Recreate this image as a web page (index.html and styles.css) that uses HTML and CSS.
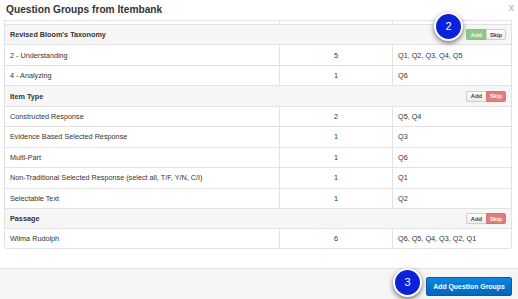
FILE: index.html
```html
<!DOCTYPE html>
<html lang="en">
    <head>
        <meta charset="UTF-8">
        <title>Question Groups from Itembank</title>
        <link rel="stylesheet" href="styles.css">
    </head>
    <body>
        <div class="modal">
            <header class="modal-header">
                <h3>Question Groups from Itembank</h3>
                <span class="cerrar">x</span>
            </header>
            <main class="modal-body">
                <div class="tabla">
                    <div class="fila corte"><div class="c1"></div><div class="c2"></div><div class="c3"></div></div>

                    <div class="fila grupo">
                        <span>Revised Bloom's Taxonomy</span>
                        <span class="botones"><button class="btn agregado">Add</button><button class="btn">Skip</button></span>
                    </div>
                    <div class="fila"><div class="c1">2 - Understanding</div><div class="c2">5</div><div class="c3">Q1, Q2, Q3, Q4, Q5</div></div>
                    <div class="fila"><div class="c1">4 - Analyzing</div><div class="c2">1</div><div class="c3">Q6</div></div>

                    <div class="fila grupo">
                        <span>Item Type</span>
                        <span class="botones"><button class="btn">Add</button><button class="btn omitido">Skip</button></span>
                    </div>
                    <div class="fila"><div class="c1">Constructed Response</div><div class="c2">2</div><div class="c3">Q5, Q4</div></div>
                    <div class="fila"><div class="c1">Evidence Based Selected Response</div><div class="c2">1</div><div class="c3">Q3</div></div>
                    <div class="fila"><div class="c1">Multi-Part</div><div class="c2">1</div><div class="c3">Q6</div></div>
                    <div class="fila"><div class="c1">Non-Traditional Selected Response (select all, T/F, Y/N, C/I)</div><div class="c2">1</div><div class="c3">Q1</div></div>
                    <div class="fila"><div class="c1">Selectable Text</div><div class="c2">1</div><div class="c3">Q2</div></div>

                    <div class="fila grupo">
                        <span>Passage</span>
                        <span class="botones"><button class="btn">Add</button><button class="btn omitido">Skip</button></span>
                    </div>
                    <div class="fila ultima"><div class="c1">Wilma Rudolph</div><div class="c2">6</div><div class="c3">Q6, Q5, Q4, Q3, Q2, Q1</div></div>
                </div>
            </main>
            <footer class="modal-footer">
                <button class="btn-primario">Add Question Groups</button>
            </footer>
            <span class="paso paso2">2</span>
            <span class="paso paso3">3</span>
        </div>
    </body>
</html>
```
FILE: styles.css
```css
* {
    box-sizing: border-box;
}
body {
    margin: 0;
    background: #fff;
    font-family: "Liberation Sans", Arial, sans-serif;
    color: #333;
}
.modal {
    position: relative;
    width: 518px;
    height: 299px;
    overflow: hidden;
    display: flex;
    flex-direction: column;
}
.modal-header {
    height: 20px;
    display: flex;
    justify-content: space-between;
    padding: 0 6px;
}
.modal-header h3 {
    margin: 0;
    padding-top: 3px;
    font-size: 10.2px;
    line-height: 13px;
    font-weight: bold;
    color: #333;
}
.cerrar {
    color: #c4c4c4;
    font-size: 10px;
    font-weight: bold;
    line-height: 12px;
    padding-top: 2px;
    margin-right: -2px;
}
.modal-body {
    height: 248px;
    padding: 0 6px 0 4px;
}
.tabla {
    border: 1px solid #e2e2e2;
    border-top: none;
    border-radius: 0 0 3px 3px;
    font-size: 7.25px;
}
.fila {
    display: flex;
    align-items: center;
    height: 20.45px;
    border-top: 1px solid #e2e2e2;
}
.fila.corte {
    height: 4px;
}
.fila.ultima {
    height: 20px;
}
.c1, .c2, .c3 {
    height: 100%;
    display: flex;
    align-items: center;
    padding: 0 5px;
}
.c1 {
    width: 274px;
}
.c2 {
    width: 113px;
    justify-content: center;
    border-left: 1px solid #e2e2e2;
}
.c3 {
    flex: 1;
    border-left: 1px solid #e2e2e2;
}
.grupo {
    background: #f6f6f6;
    justify-content: space-between;
    padding: 0 5px;
    font-weight: bold;
}
.botones {
    display: flex;
}
.btn {
    width: 20px;
    height: 11px;
    padding: 0;
    font-family: "Liberation Sans", Arial, sans-serif;
    font-size: 5.8px;
    font-weight: bold;
    color: #444;
    background: linear-gradient(#fdfdfd, #ececec);
    border: 1px solid #cfcfcf;
    border-radius: 0 2px 2px 0;
}
.btn:first-child {
    border-right: none;
    border-radius: 2px 0 0 2px;
}
.btn.agregado {
    background: #8cc98a;
    border-color: #86c384;
    color: #f2fff2;
}
.btn.omitido {
    background: #df7f7b;
    border-color: #d77571;
    color: #fff4f4;
}
.modal-footer {
    flex: 1;
    display: flex;
    justify-content: flex-end;
    align-items: flex-start;
    padding: 8px 6px 0 0;
    background: #f5f5f5;
    border-top: 1px solid #e3e3e3;
}
.btn-primario {
    width: 86px;
    height: 19px;
    padding: 0;
    font-family: "Liberation Sans", Arial, sans-serif;
    font-size: 6.9px;
    font-weight: bold;
    color: #fff;
    background: linear-gradient(#0d86e3, #0064bb);
    border: 1px solid #0a5aa6;
    border-radius: 2px;
}
.paso {
    position: absolute;
    width: 29px;
    height: 29px;
    border-radius: 50%;
    background: #0b22da;
    border: 2px solid #fff;
    box-shadow: 0 2px 5px rgba(0, 0, 0, 0.55);
    color: #fff;
    font-size: 11px;
    line-height: 25px;
    text-align: center;
}
.paso2 {
    left: 434px;
    top: 12px;
}
.paso3 {
    left: 393px;
    top: 268px;
}
```
